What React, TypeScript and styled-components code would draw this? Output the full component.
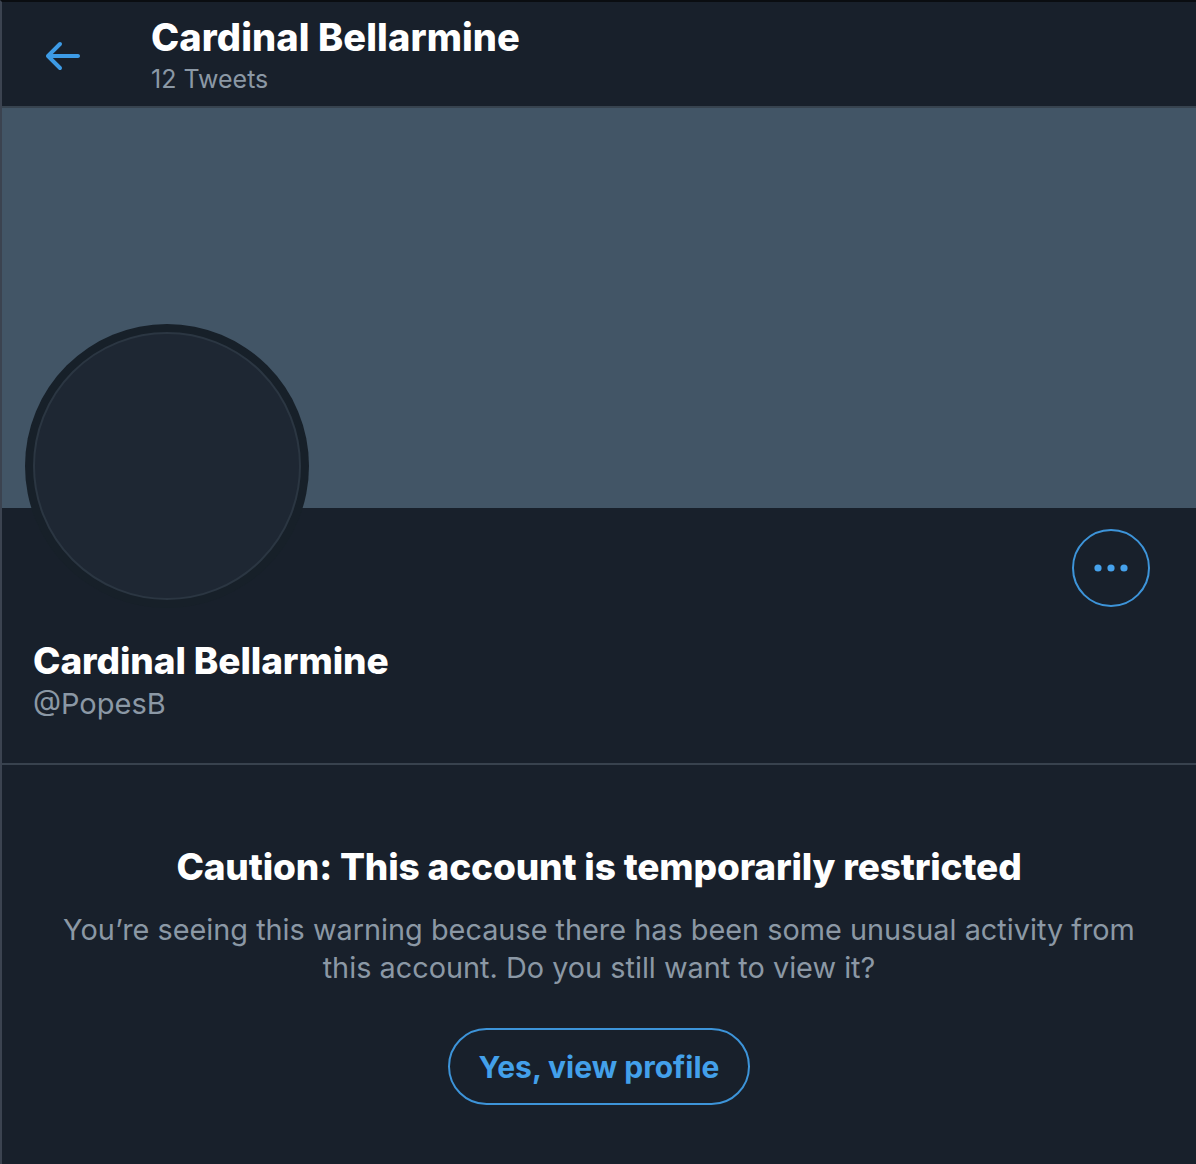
import React from "react";
import styled, { createGlobalStyle } from "styled-components";

const Global = createGlobalStyle`
  html, body { margin: 0; padding: 0; background: #18202b; }
  body { font-family: Inter, "Liberation Sans", Arial, sans-serif; -webkit-font-smoothing: antialiased; }
  * { box-sizing: border-box; }
`;

const Page = styled.div`
  width: 1196px;
  min-height: 1164px;
  background: #18202b;
  border-left: 2px solid #3b4350;
  border-top: 2px solid #0a0d11;
  color: #fff;
`;

const Header = styled.header`
  height: 106px;
  display: flex;
  align-items: flex-start;
  border-bottom: 2px solid #37434f;
`;

const BackButton = styled.div`
  width: 48px;
  height: 48px;
  margin: 30px 0 0 36px;
  color: #3d9be6;
  svg { display: block; }
`;

const HeaderText = styled.div`
  margin: 12px 0 0 65px;
  display: flex;
  flex-direction: column;
`;

const Title = styled.div<{ $size: number; $ls: number }>`
  font-size: ${(p) => p.$size}px;
  line-height: 46px;
  font-weight: 800;
  letter-spacing: ${(p) => p.$ls}px;
  color: #fff;
`;

const Subtle = styled.div<{ $size: number; $lh: number; $mt?: number }>`
  font-size: ${(p) => p.$size}px;
  line-height: ${(p) => p.$lh}px;
  margin-top: ${(p) => p.$mt ?? 0}px;
  color: #8b98a5;
`;

const Banner = styled.div`
  height: 400px;
  background: #425566;
`;

const ProfileTop = styled.div`
  display: flex;
  justify-content: space-between;
  align-items: flex-start;
  padding: 0 46px 0 23px;
`;

const AvatarRing = styled.div`
  width: 284px;
  height: 284px;
  margin-top: -184px;
  border-radius: 50%;
  background: #172029;
  padding: 8px;
`;

const AvatarInner = styled.div`
  width: 100%;
  height: 100%;
  border-radius: 50%;
  background: #1e2733;
  border: 2px solid #2b3642;
`;

const MoreButton = styled.div`
  width: 78px;
  height: 78px;
  margin-top: 21px;
  border-radius: 50%;
  border: 2px solid #3d94d9;
  display: flex;
  align-items: center;
  justify-content: center;
  svg { display: block; }
`;

const NameBlock = styled.div`
  padding: 30px 0 39px 31px;
  border-bottom: 2px solid #38424e;
`;

const Caution = styled.section`
  padding: 79px 40px 0;
  display: flex;
  flex-direction: column;
  align-items: center;
  text-align: center;
`;

const Body = styled.p`
  margin: 21px 0 0;
  max-width: 1100px;
  font-size: 28.85px;
  line-height: 38px;
  color: #8b98a5;
`;

const ViewButton = styled.button`
  margin-top: 41px;
  width: 302px;
  height: 77px;
  border-radius: 40px;
  border: 2px solid #3d94d9;
  background: transparent;
  color: #43a0ea;
  font-family: inherit;
  font-size: 30px;
  font-weight: 700;
  letter-spacing: 0px;
  cursor: pointer;
`;

export default function App() {
  return (
    <>
      <Global />
      <Page>
        <Header>
          <BackButton>
            <svg viewBox="0 0 24 24" width="48" height="48" fill="currentColor">
              <path d="M20 11H7.414l4.293-4.293c.39-.39.39-1.023 0-1.414s-1.023-.39-1.414 0l-6 6c-.39.39-.39 1.023 0 1.414l6 6c.195.195.45.293.707.293s.512-.098.707-.293c.39-.39.39-1.023 0-1.414L7.414 13H20c.553 0 1-.447 1-1s-.447-1-1-1z" />
            </svg>
          </BackButton>
          <HeaderText>
            <Title $size={38} $ls={0.1}>Cardinal Bellarmine</Title>
            <Subtle $size={25} $lh={34} $mt={2}>12 Tweets</Subtle>
          </HeaderText>
        </Header>
        <Banner />
        <ProfileTop>
          <AvatarRing>
            <AvatarInner />
          </AvatarRing>
          <MoreButton>
            <svg width="40" height="12" viewBox="0 0 40 12" fill="#46a2ec">
              <circle cx="7" cy="6" r="3.6" />
              <circle cx="20" cy="6" r="3.6" />
              <circle cx="33" cy="6" r="3.6" />
            </svg>
          </MoreButton>
        </ProfileTop>
        <NameBlock>
          <Title $size={37} $ls={-0.1}>Cardinal Bellarmine</Title>
          <Subtle $size={29} $lh={40}>@PopesB</Subtle>
        </NameBlock>
        <Caution>
          <Title $size={37} $ls={-0.15}>Caution: This account is temporarily restricted</Title>
          <Body>
            You’re seeing this warning because there has been some unusual activity from this account. Do you still want to view it?
          </Body>
          <ViewButton>Yes, view profile</ViewButton>
        </Caution>
      </Page>
    </>
  );
}
